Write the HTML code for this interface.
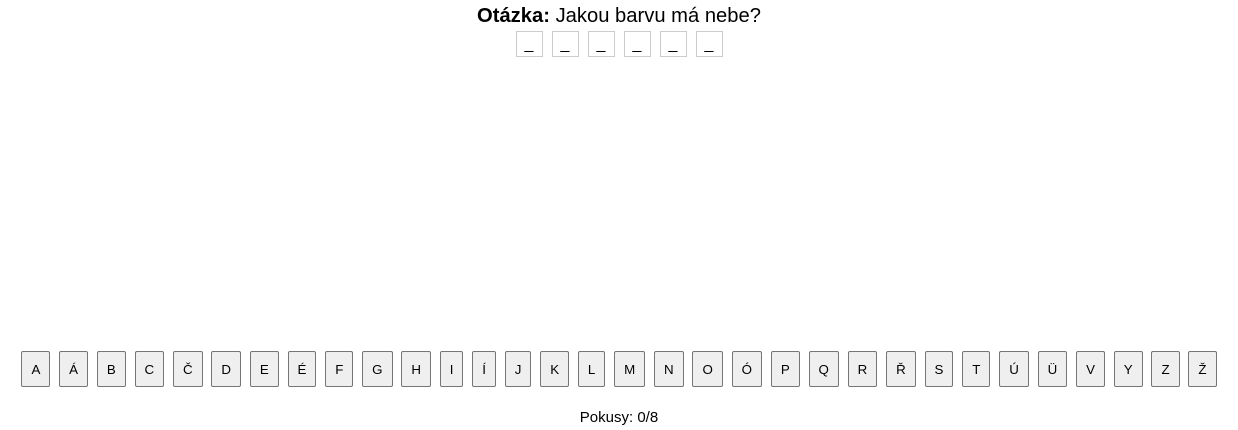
<!DOCTYPE html>
<html><head><meta charset="utf-8"><style>
body{margin:0;width:1238px;height:430px;background:#fff;font-family:"Liberation Sans",Arial,sans-serif;position:relative;overflow:hidden}
.q{position:absolute;top:5px;left:0;width:1238px;text-align:center;font-size:20.2px;color:#000}
.boxes{position:absolute;top:31px;left:0;width:1238px;display:flex;justify-content:center;gap:9px}
.boxes span{box-sizing:border-box;width:27px;height:26px;border:1px solid #ccc;font-size:16px;text-align:center;line-height:26px}
.keys{position:absolute;top:351px;left:0;width:1238px;display:flex;justify-content:center;gap:8.8px}
.keys button{box-sizing:border-box;height:36px;padding:0 9px;font:13.33px "Liberation Sans",Arial,sans-serif;background:#efefef;border:1px solid #767676;border-radius:2px;color:#000}
.p{position:absolute;top:409px;left:0;width:1238px;text-align:center;font-size:15px}
</style></head><body>
<div class="q"><b>Otázka:</b> Jakou barvu má nebe?</div>
<div class="boxes"><span>_</span><span>_</span><span>_</span><span>_</span><span>_</span><span>_</span></div>
<div class="keys"><button>A</button><button>Á</button><button>B</button><button>C</button><button>Č</button><button>D</button><button>E</button><button>É</button><button>F</button><button>G</button><button>H</button><button>I</button><button>Í</button><button>J</button><button>K</button><button>L</button><button>M</button><button>N</button><button>O</button><button>Ó</button><button>P</button><button>Q</button><button>R</button><button>Ř</button><button>S</button><button>T</button><button>Ú</button><button>Ü</button><button>V</button><button>Y</button><button>Z</button><button>Ž</button></div>
<div class="p">Pokusy: 0/8</div>
</body></html>
